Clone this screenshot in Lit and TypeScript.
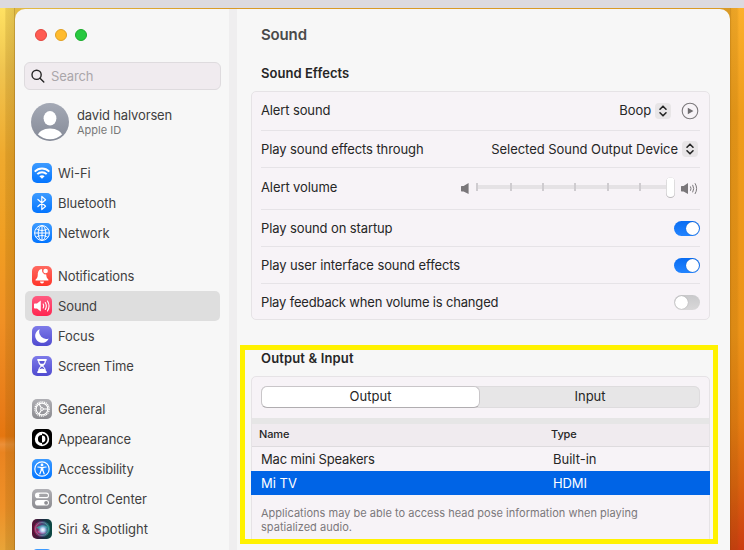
import { LitElement, html, css, svg, nothing } from "lit";
import { customElement, property } from "lit/decorators.js";

const glyphs: Record<string, unknown> = {
  wifi: svg`<g fill="none" stroke="#fff" stroke-width="1.9"><path d="M2.7 8.6C6.8 4.4 13.2 4.4 17.3 8.6"/><path d="M5.3 11.2C8 8.5 12 8.5 14.7 11.2"/></g><path d="M7.4 13.2C8.9 11.8 11.1 11.8 12.6 13.2L10 15.8Z" fill="#fff"/>`,
  bluetooth: svg`<path d="M5.9 6.5L13.6 13.2L9.8 16.6V3.4L13.6 6.8L5.9 13.5" fill="none" stroke="#fff" stroke-width="1.2" stroke-linejoin="round" stroke-linecap="round"/>`,
  network: svg`<g fill="none" stroke="#fff" stroke-width="1"><circle cx="10" cy="10" r="7.4"/><ellipse cx="10" cy="10" rx="3.8" ry="7.4"/><path d="M10 2.6V17.4M2.6 10H17.4M4.2 5.8C7.8 8 12.2 8 15.8 5.8M4.2 14.2C7.8 12 12.2 12 15.8 14.2"/></g>`,
  bell: svg`<path d="M9.9 3C7 3.2 5.9 5.6 5.8 8.4C5.7 11.4 4.8 12.2 3.7 13.4C3.2 14.1 3.5 14.6 4.2 14.6H15.8C16.5 14.6 16.8 14.1 16.3 13.4C15.1 12.2 14.4 11.3 14.2 8.4L12.2 8.2L10.2 6Z" fill="#fff"/><path d="M8 15.4H12A2 2 0 0 1 8 15.4Z" fill="#fff"/><circle cx="13.6" cy="5" r="2.3" fill="#fff"/>`,
  sound: svg`<path d="M2 8.3Q2 7.6 2.7 7.6H5L8.8 4.4V15.6L5 12.4H2.7Q2 12.4 2 11.7Z" fill="#fff"/><g fill="none" stroke="#fff" stroke-width="1.1" stroke-linecap="round"><path d="M11.2 8Q12.3 10 11.2 12"/><path d="M13.3 6.5Q15.4 10 13.3 13.5"/><path d="M15.5 5Q18.6 10 15.5 15"/></g>`,
  moon: svg`<path d="M7.7 3.3A7 7 0 1 0 16.7 12.4A7 7 0 0 1 7.7 3.3Z" fill="#fff"/>`,
  hourglass: svg`<path d="M5.3 3H14.7V4.7H14C13.9 7.5 12.4 8.8 11.3 10C12.4 11.2 13.9 12.5 14 15.3H14.7V17H5.3V15.3H6C6.1 12.5 7.6 11.2 8.7 10C7.6 8.8 6.1 7.5 6 4.7H5.3Z" fill="#fff"/><path d="M7.3 4.9H12.7C12.5 6.4 12 7 11.4 7.7H8.6C8 7 7.5 6.4 7.3 4.9ZM10 10.4C11.2 11.2 12.2 12 12.5 13.3L10 12.4L7.5 13.3C7.8 12 8.8 11.2 10 10.4Z" fill="#5a55d6"/>`,
  gear: svg`<g fill="none" stroke="#fff"><circle cx="10" cy="10" r="7.1" stroke-width="1.5" stroke-dasharray="1.1 .76"/><circle cx="10" cy="10" r="5.9" stroke-width="1.2"/><circle cx="10" cy="10" r="1.4" stroke-width="1"/><path d="M11.4 10H16M9.3 8.8L7 4.9M9.3 11.2L7 15.1" stroke-width="1.1"/></g>`,
  appearance: svg`<circle cx="10" cy="10" r="7.2" fill="#fff"/><path d="M10 5.9A4.1 4.1 0 0 0 10 14.1Z" fill="#000"/><path d="M10 4.5A5.5 5.5 0 0 1 10 15.5Z" fill="#000"/><path d="M10 6.6A3.4 3.4 0 0 1 10 13.4Z" fill="#fff"/>`,
  person: svg`<circle cx="10" cy="10" r="7.2" fill="none" stroke="#fff" stroke-width="1.2"/><circle cx="10" cy="5.9" r="1.4" fill="#fff"/><path d="M5.9 8L10 8.7L14.1 8M10 8.6V11.2M9.2 8.8V11.3L7.8 15M10.8 8.8V11.3L12.2 15" fill="none" stroke="#fff" stroke-width="1.2" stroke-linecap="round" stroke-linejoin="round"/>`,
  toggles: svg`<rect x="3" y="3.6" width="14" height="5.6" rx="2.8" fill="#fff"/><rect x="6.6" y="4.7" width="9.4" height="3.4" rx="1.7" fill="#a4a4a8"/><circle cx="5.7" cy="6.4" r="1.7" fill="#fff"/><rect x="3" y="11" width="14" height="5.6" rx="2.8" fill="#fff"/><circle cx="14.1" cy="13.8" r="1.9" fill="#8e8e93"/>`,
  siri: svg`<defs><radialGradient id="orb"><stop offset="0" stop-color="#fff"/><stop offset=".4" stop-color="#b4cdf0"/><stop offset="1" stop-color="#4a80c0" stop-opacity="0"/></radialGradient><linearGradient id="ring"><stop offset="0" stop-color="#d81b60"/><stop offset=".5" stop-color="#5b4c8c"/><stop offset="1" stop-color="#16a08c"/></linearGradient></defs><circle cx="10" cy="10" r="8" fill="url(#ring)" opacity=".75"/><circle cx="10" cy="10" r="6.5" fill="none" stroke="#7fb0b8" stroke-width=".8" opacity=".7"/><path d="M4 9Q9 4 16 8L11 11Z" fill="#2fb3a4" opacity=".8"/><path d="M5 13Q9 16 14 14L10 10Z" fill="#ef3c8a" opacity=".8"/><circle cx="10.8" cy="10.8" r="5.4" fill="url(#orb)"/>`,
};

@customElement("nav-item")
class NavItem extends LitElement {
  @property() label = "";
  @property() icon = "";
  @property() tone = "blue";
  @property() track = "";
  @property({ type: Boolean, reflect: true }) active = false;
  static styles = css`
    :host { display: flex; align-items: center; height: 30px; padding-left: 7px; gap: 6px; border-radius: 5px; box-sizing: border-box; flex: none; }
    :host([active]) { background: #dedede; }
    svg { width: 20px; height: 20px; border-radius: 5px; flex: none; display: block; }
    .blue { background: linear-gradient(#3d9bff, #0375ff); }
    .red { background: linear-gradient(#ff6a61, #ff3529); }
    .pink { background: linear-gradient(#ff5c82, #ff2650); }
    .indigo { background: linear-gradient(#7e7be9, #504bd0); }
    .gray { background: linear-gradient(#b0b0b5, #8b8b90); }
    .black { background: #000; }
    .siri { background: linear-gradient(90deg, #5c1238, #1b2940 55%, #0b4a44); }
    span { font-size: 13px; color: #3f3f3f; white-space: nowrap; }
  `;
  render() {
    return html`<svg class=${this.tone} viewBox="0 0 20 20">${glyphs[this.icon] ?? nothing}</svg>
      <span style="letter-spacing:${this.track || "0"}px">${this.label}</span>`;
  }
}

@customElement("toggle-switch")
class ToggleSwitch extends LitElement {
  @property({ type: Boolean, reflect: true }) on = false;
  static styles = css`
    :host { display: flex; width: 26px; height: 15px; border-radius: 8px; background: linear-gradient(#c9c9cb, #d9d8d9); padding: 1px; box-sizing: border-box; }
    :host([on]) { background: linear-gradient(#0a6df2, #2384ff); justify-content: flex-end; }
    i { width: 13px; height: 13px; border-radius: 50%; background: #fff; box-shadow: 0 0 1px rgba(0, 0, 0, 0.35); }
  `;
  render() {
    return html`<i></i>`;
  }
}

const sidebar = [
  [
    ["Wi-Fi", "wifi", "blue", "0"],
    ["Bluetooth", "bluetooth", "blue", "-0.05"],
    ["Network", "network", "blue", "-0.1"],
  ],
  [
    ["Notifications", "bell", "red", "-0.1"],
    ["Sound", "sound", "pink", "-0.1"],
    ["Focus", "moon", "indigo", "-0.1"],
    ["Screen Time", "hourglass", "indigo", "-0.16"],
  ],
  [
    ["General", "gear", "gray", "-0.1"],
    ["Appearance", "appearance", "black", "-0.2"],
    ["Accessibility", "person", "blue", "-0.15"],
    ["Control Center", "toggles", "gray", "-0.08"],
    ["Siri & Spotlight", "siri", "siri", "0"],
    ["", "", "blue", "0"],
  ],
];

@customElement("app-root")
class AppRoot extends LitElement {
  static styles = css`
    :host { display: flex; flex-direction: column; width: 744px; height: 550px; overflow: hidden; font-family: Inter, "Liberation Sans", sans-serif; font-size: 13px; line-height: 16px; color: #262626; background: #dcdadf; }
    * { box-sizing: border-box; }
    .menubar { height: 8px; flex: none; }
    .desk { flex: 1; min-height: 0; display: grid; grid-template-columns: 15px 715px 14px; background: #d99a22; overflow: hidden; }
    .left { background: linear-gradient(90deg, transparent 30%, rgba(120, 80, 0, 0.15) 40%, rgba(120, 80, 0, 0.2) 90%, rgba(110, 65, 0, 0.5)), linear-gradient(207deg, transparent 0, transparent 437px, rgba(255, 190, 110, 0) 437px), linear-gradient(#ffe262, #f0c550 11%, #efaa2e 27%, #f09e22 43%, #f09024 58%, #e87c18 74%, #e5760f 79%, #ec9038 80.5%, #ea8420 82%, #ee9028 92%, #e8a438); }
    .right { background: linear-gradient(90deg, rgba(110, 65, 0, 0.35), rgba(120, 80, 0, 0.14) 12%, rgba(120, 80, 0, 0.12) 50%, transparent 65%), linear-gradient(#fcb02b, #ee9c1b 20%, #ec9318 60%, #e57d12 76%, #d9610f 88%, #cc3c10); }
    .mid { background: linear-gradient(90deg, #e2bb46, #d99a26 30%, #d99a26); padding-top: 1px; display: flex; min-height: 0; }
    .window { flex: 1; display: grid; grid-template-columns: 214px 8px 1fr; background: #f7f7f7; border-radius: 10px 10px 0 0; overflow: hidden; min-height: 0; height: 541px; }
    .gutter { background: #efeeef; }
    .side { padding: 20px 9px 0 10px; display: flex; flex-direction: column; min-height: 0; overflow: hidden; }
    .lights { display: flex; gap: 8px; padding-left: 10px; height: 12px; flex: none; }
    .lights i { width: 12px; height: 12px; border-radius: 50%; border: 1px solid; }
    .r { background: #ff5b52; border-color: #e2463f !important; }
    .y { background: #ffbb2e; border-color: #e0a023 !important; }
    .g { background: #28c940; border-color: #1aab2c !important; }
    .search { margin: 21px -2px 0 -1px; height: 28px; width: 197px; border: 1px solid #dedbde; border-radius: 6px; background: #f0ebef; display: flex; align-items: center; padding-left: 6px; gap: 6px; color: #aaa6aa; flex: none; }
    .search svg { width: 14px; height: 14px; margin-top: -1px; }
    .user { display: flex; margin-top: 13px; gap: 8px; height: 38px; padding-left: 6px; align-items: center; flex: none; }
    .user > svg { width: 38px; height: 38px; }
    .who { line-height: 15px; color: #3f3f3f; padding-top: 1px; }
    .sub { font-size: 11px; color: #777; line-height: 14px; }
    .groups { display: flex; flex-direction: column; gap: 13px; margin-top: 17px; }
    .group { display: flex; flex-direction: column; }
    .main { display: flex; flex-direction: column; min-height: 0; }
    h1 { margin: 16px 0 0 24px; font-size: 15px; line-height: 20px; font-weight: 600; color: #4a4a4a; }
    h2 { margin: 0; font-size: 13px; line-height: 16px; font-weight: 600; color: #262626; }
    .fx { margin: 20px 0 0 24px; }
    .card { margin: 10px 0 0 14px; width: 459px; border: 1px solid #e6e3e6; border-radius: 5px; background: #f7f3f7; padding: 0 9px; }
    .row { display: flex; align-items: center; justify-content: space-between; height: 37px; border-bottom: 1px solid #e6e3e7; }
    .row:last-child { border: 0; height: 35px; }
    .row.a { height: 39px; }
    .row.v { height: 42px; }
    .row.a > span:first-child, .row.a .ctl > span { margin-top: -2px; }
    .row.v > span:first-child { margin-top: -4px; }
    .row toggle-switch { margin-top: 1px; }
    .row:last-child toggle-switch { margin-top: 2px; }
    .row:last-child > span { margin-top: 1px; }
    .ctl { display: flex; align-items: center; }
    .step { width: 16px; height: 16px; border-radius: 4px; background: #e8e5e7; display: block; margin-left: 4px; }
    .row.b .step { margin-right: 2px; }
    .play { width: 18px; height: 18px; margin-left: 10px; margin-right: 1px; }
    .vol { display: flex; align-items: center; height: 22px; margin: -2px 2px 0 0; }
    .track { width: 201px; height: 22px; margin: 0 3px 0 6px; }
    .frame { margin: 25px 0 0 3px; width: 478px; height: 199px; border: 5px solid #fff200; overflow: hidden; flex: none; }
    .frame h2 { margin: 0 0 0 16px; }
    .card2 { margin: 10px 0 0 6px; width: 459px; height: 180px; border: 1px solid #e6e3e6; border-radius: 5px 5px 0 0; background: #f7f3f7; }
    .seg { margin: 9px 9px 0; height: 22px; border-radius: 6px; background: #e7e6e7; box-shadow: inset 0 0 0 1px #dedcde; display: grid; grid-template-columns: 219px 1fr; text-align: center; line-height: 21px; }
    .seg b { font-weight: 400; background: #fff; border: 1px solid #c9c6c9; border-bottom-color: #b0adb0; border-radius: 6px; line-height: 19px; }
    .strip { height: 6px; margin-top: 10px; background: #e6e6e6; }
    .cols { display: grid; grid-template-columns: 292px 1fr; align-items: center; }
    .head { height: 23px; background: #f0ebef; border-bottom: 1px solid #dedbde; font-size: 11px; padding-left: 7px; padding-bottom: 3px; font-weight: 500; }
    .item { height: 24px; padding-left: 9px; }
    .sel { background: #0064e6; color: #fff; margin: 0 -1px; padding-left: 10px; }
    .note { margin: 11px 0 0 9px; font-size: 11px; line-height: 14px; color: #7b787b; white-space: nowrap; }
  `;

  label(text: string, track = 0) {
    return html`<span style="letter-spacing:${track}px">${text}</span>`;
  }

  stepper() {
    return html`<svg class="step" viewBox="0 0 16 16"><path d="M5 6.2L8 3.2L11 6.2M5 9.8L8 12.8L11 9.8" fill="none" stroke="#262626" stroke-width="1.6" stroke-linecap="round" stroke-linejoin="round"/></svg>`;
  }

  render() {
    return html`
      <div class="menubar"></div>
      <div class="desk">
        <div class="left"></div>
        <div class="mid">
          <div class="window">
            <div class="side">
              <div class="lights"><i class="r"></i><i class="y"></i><i class="g"></i></div>
              <div class="search">
                <svg viewBox="0 0 14 14" fill="none" stroke="#262626" stroke-width="1.4" stroke-linecap="round"><circle cx="5.6" cy="5.8" r="4.6"/><path d="M9 9.2L12.8 13"/></svg>
                ${this.label("Search", -0.15)}
              </div>
              <div class="user">
                <svg viewBox="0 0 38 38"><defs><linearGradient id="av" x2="0" y2="1"><stop stop-color="#a4a9b5"/><stop offset="1" stop-color="#858a97"/></linearGradient><clipPath id="cp"><circle cx="19" cy="19" r="17.2"/></clipPath></defs><circle cx="19" cy="19" r="19" fill="url(#av)"/><ellipse cx="19" cy="15.3" rx="6.4" ry="7.2" fill="#fff"/><ellipse cx="19" cy="33.5" rx="12.2" ry="8" fill="#fff" clip-path="url(#cp)"/></svg>
                <div><div class="who">${this.label("david halvorsen", -0.14)}</div><div class="sub">${this.label("Apple ID")}</div></div>
              </div>
              <div class="groups">
                ${sidebar.map((g) => html`<div class="group">${g.map(([l, i, t, k]) => html`<nav-item .label=${l} .icon=${i} .tone=${t} .track=${k} ?active=${l === "Sound"}></nav-item>`)}</div>`)}
              </div>
            </div>
            <div class="gutter"></div>
            <div class="main">
              <h1>${this.label("Sound", -0.15)}</h1>
              <h2 class="fx">${this.label("Sound Effects", 0.04)}</h2>
              <div class="card">
                <div class="row a">${this.label("Alert sound", -0.13)}
                  <div class="ctl">${this.label("Boop", -0.1)}${this.stepper()}
                    <svg class="play" viewBox="0 0 18 18"><circle cx="9" cy="9" r="7.8" fill="none" stroke="#7d7a7d" stroke-width="1.1"/><path d="M6.8 5.8L12.4 9L6.8 12.2Z" fill="#6f6c6f"/></svg>
                  </div>
                </div>
                <div class="row b">${this.label("Play sound effects through", -0.09)}
                  <div class="ctl">${this.label("Selected Sound Output Device", -0.05)}${this.stepper()}</div>
                </div>
                <div class="row v">${this.label("Alert volume", -0.1)}
                  <div class="vol">
                    <svg width="10" height="14" viewBox="0 0 10 14"><path d="M1 5.6Q1 5 1.6 5H3.6L8.6 2V13L3.6 10.4H1.6Q1 10.4 1 9.8Z" fill="#7a777a"/></svg>
                    <svg class="track" viewBox="0 0 201 22"><rect x="1" y="8" width="194" height="4" fill="#e5e2e5"/>${[0, 34, 66, 98, 131, 163].map((x) => svg`<rect x=${x} y="6" width="2" height="8" fill="#cfccd0"/>`)}<rect x="190" y=".5" width="9" height="20.5" rx="4.5" fill="#bbb8bb"/><rect x="190.5" y=".5" width="8" height="19.5" rx="4" fill="#fff"/></svg>
                    <svg width="18" height="14" viewBox="0 0 18 14"><path d="M1 5.6Q1 5 1.6 5H3.6L8 2V13L3.6 10.4H1.6Q1 10.4 1 9.8Z" fill="#7a777a"/><g fill="none" stroke="#7a777a" stroke-width="1" stroke-linecap="round"><path d="M10.6 5.8Q11.6 7.6 10.6 9.4"/><path d="M12.8 4.2Q14.8 7.6 12.8 11"/><path d="M15.2 2.6Q18.2 7.6 15.2 12.6"/></g></svg>
                  </div>
                </div>
                <div class="row">${this.label("Play sound on startup", -0.11)}<toggle-switch on></toggle-switch></div>
                <div class="row">${this.label("Play user interface sound effects", -0.1)}<toggle-switch on></toggle-switch></div>
                <div class="row">${this.label("Play feedback when volume is changed", -0.17)}<toggle-switch></toggle-switch></div>
              </div>
              <div class="frame">
                <h2>${this.label("Output & Input", 0.15)}</h2>
                <div class="card2">
                  <div class="seg"><b>${this.label("Output")}</b>${this.label("Input")}</div>
                  <div class="strip"></div>
                  <div class="cols head">${this.label("Name", -0.15)}${this.label("Type", -0.1)}</div>
                  <div class="cols item">${this.label("Mac mini Speakers", -0.17)}${this.label("Built-in")}</div>
                  <div class="cols item sel">${this.label("Mi TV")}${this.label("HDMI", -0.1)}</div>
                  <div class="note">${this.label("Applications may be able to access head pose information when playing", 0.02)}<br />${this.label("spatialized audio.", 0.02)}</div>
                </div>
              </div>
            </div>
          </div>
        </div>
        <div class="right"></div>
      </div>
    `;
  }
}
